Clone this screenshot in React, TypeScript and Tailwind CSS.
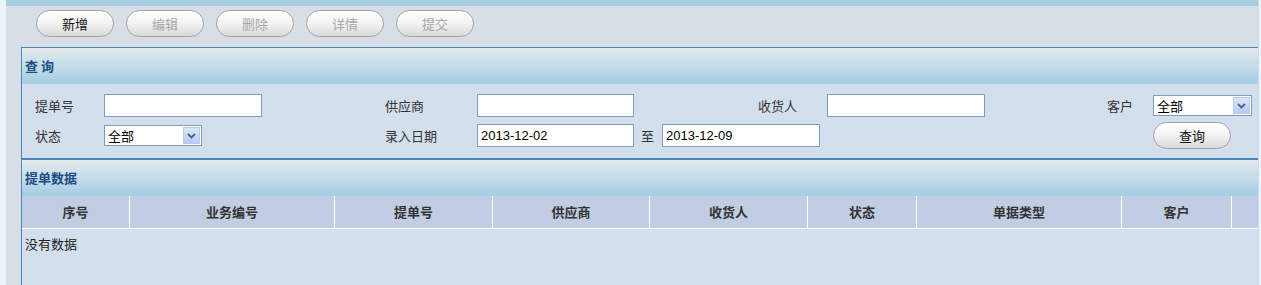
import type { ReactNode } from "react";

const cjk = "font-['SimSun','Noto_Sans_CJK_SC',sans-serif]";

function PillButton({ label, disabled = false }: { label: string; disabled?: boolean }) {
  return (
    <button
      className={`flex h-[27px] w-[78px] items-center justify-center rounded-full border border-[#a3a3a3] bg-linear-to-b from-[#ffffff] via-[#f3f3f3] to-[#d9d9d9] text-[13px] shadow-[inset_0_1px_0_#fff] ${
        disabled ? "text-[#a8a8a8]" : "text-[#111]"
      }`}
    >
      {label}
    </button>
  );
}

function TextBox({ width, value }: { width: string; value?: string }) {
  return (
    <div
      className={`flex h-[23px] items-center border border-[#7f9db9] bg-white pl-[3px] font-['Liberation_Sans',sans-serif] text-[13px] text-black ${width}`}
    >
      {value}
    </div>
  );
}

function SelectBox({ width }: { width: string }) {
  return (
    <div className={`flex h-[21px] items-center border border-[#7f9db9] bg-white ${width}`}>
      <span className="flex-1 pl-[3px] text-[13px] text-black">全部</span>
      <span className="mr-[1px] flex h-[17px] w-[17px] items-center justify-center border border-[#b9c9ef] bg-linear-to-b from-[#dce6fb] to-[#b8cbf3]">
        <svg width="9" height="6" viewBox="0 0 9 6">
          <path d="M1 1 L4.5 4.5 L8 1" stroke="#4d6185" strokeWidth="1.8" fill="none" />
        </svg>
      </span>
    </div>
  );
}

function Label({ className, children }: { className: string; children: ReactNode }) {
  return <span className={`text-[13px] text-[#333] ${className}`}>{children}</span>;
}

function SectionHeader({ title }: { title: string }) {
  return (
    <div className="flex h-[36px] items-center bg-linear-to-b from-[#e3eaed] to-[#a4cde3] pl-[3px] text-[13px] font-bold text-[#1c4b86]">
      {title}
    </div>
  );
}

const columns = [
  { label: "序号", w: "w-[107px]" },
  { label: "业务编号", w: "w-[205px]" },
  { label: "提单号", w: "w-[158px]" },
  { label: "供应商", w: "w-[157px]" },
  { label: "收货人", w: "w-[158px]" },
  { label: "状态", w: "w-[109px]" },
  { label: "单据类型", w: "w-[205px]" },
  { label: "客户", w: "w-[110px]" },
  { label: "", w: "flex-1" },
];

export default function App() {
  return (
    <div className={`flex h-[285px] w-[1261px] overflow-hidden bg-[#eaf4fb] ${cjk}`}>
      <div className="w-[6px]" />
      <div className="flex w-[1252px] flex-col bg-[#d8dee5]">
        <div className="h-[6px] bg-[#a9cfe3]" />

        {/* toolbar */}
        <div className="flex h-[41px] items-start gap-[12px] pl-[30px] pt-[4px]">
          <PillButton label="新增" />
          <PillButton label="编辑" disabled />
          <PillButton label="删除" disabled />
          <PillButton label="详情" disabled />
          <PillButton label="提交" disabled />
        </div>

        <div className="ml-[15px] flex flex-1 flex-col border-l border-t border-[#4a86b8] bg-[#d3dfed]">
          <SectionHeader title="查 询" />

          {/* query form */}
          <div className="flex h-[74px] flex-col pt-[10px]">
            <div className="flex h-[23px] items-center">
              <Label className="w-[82px] pl-[13px]">提单号</Label>
              <TextBox width="w-[158px]" />
              <Label className="w-[123px]">{""}</Label>
              <Label className="w-[92px]">供应商</Label>
              <TextBox width="w-[157px]" />
              <Label className="w-[193px] pl-[124px]">收货人</Label>
              <TextBox width="w-[158px]" />
              <Label className="w-[168px] pl-[122px]">客户</Label>
              <SelectBox width="w-[99px]" />
            </div>
            <div className="mt-[5px] flex h-[27px] items-center">
              <Label className="w-[82px] pl-[13px]">状态</Label>
              <SelectBox width="w-[98px]" />
              <Label className="w-[183px]">{""}</Label>
              <Label className="w-[92px]">录入日期</Label>
              <TextBox width="w-[157px]" value="2013-12-02" />
              <Label className="w-[28px] pl-[7px]">至</Label>
              <TextBox width="w-[158px]" value="2013-12-09" />
              <div className="w-[333px]" />
              <PillButton label="查询" />
            </div>
          </div>

          <div className="h-[2px] bg-[#4a86b8]" />
          <SectionHeader title="提单数据" />

          {/* data table */}
          <div className="flex h-[33px] border-b border-white bg-[#c1cde2]">
            {columns.map((c, i) => (
              <div
                key={i}
                className={`flex items-center justify-center text-[13px] font-bold text-[#333] ${c.w} ${
                  i > 0 ? "border-l border-white" : ""
                }`}
              >
                {c.label}
              </div>
            ))}
          </div>
          <div className="pl-[3px] pt-[5px] text-[13px] text-[#222]">没有数据</div>
        </div>
      </div>
      <div className="w-[1px] bg-[#c9dced]" />
    </div>
  );
}
